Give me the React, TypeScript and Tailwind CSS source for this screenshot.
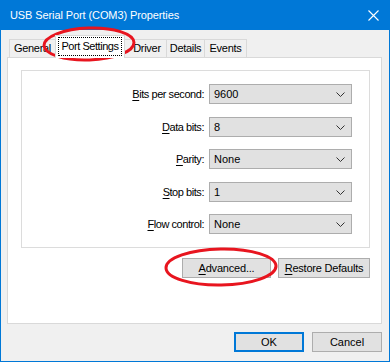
import React from "react";

const font = { fontFamily: '"Liberation Sans", Arial, sans-serif' };

function Chevron() {
  return (
    <svg width="9" height="5" viewBox="0 0 9 5" className="shrink-0">
      <polyline points="0.5,0.5 4.5,4.5 8.5,0.5" fill="none" stroke="#333" strokeWidth="1" />
    </svg>
  );
}

function Row({ label, u, value, mt }: { label: string; u: string; value: string; mt: string }) {
  return (
    <div className={`flex items-center h-[20px] ${mt}`}>
      <div className="w-[187px] text-right pr-[5px] text-[11px] tracking-[-0.45px] text-black leading-none whitespace-nowrap">
        <span className="underline underline-offset-2">{u}</span>
        {label}
      </div>
      <div className="w-[143px] h-[20px] border border-[#adadad] bg-[#e1e1e1] flex items-center pl-[4px] pr-[6px] justify-between">
        <span className="text-[11px] text-black leading-none">{value}</span>
        <Chevron />
      </div>
    </div>
  );
}

export default function App() {
  return (
    <div style={font} className="relative w-[390px] h-[362px] border-x border-b border-[#0078d7] bg-[#f0f0f0] flex flex-col overflow-hidden whitespace-nowrap">
      {/* Title bar */}
      <div className="h-[30px] bg-[#0078d7] flex items-center justify-between pl-[9px] pr-[10px] shrink-0">
        <span className="text-white text-[11px] tracking-[-0.1px]">USB Serial Port (COM3) Properties</span>
        <svg width="11" height="11" viewBox="0 0 11 11">
          <path d="M0.5 0.5 L10.5 10.5 M10.5 0.5 L0.5 10.5" stroke="white" strokeWidth="1.1" />
        </svg>
      </div>

      <div className="flex flex-col px-[6px] pt-[5px]">
        {/* Tabs */}
        <div className="flex items-end h-[22px] pl-[2px] text-[11px] tracking-[-0.3px] text-black">
          <div className="w-[46px] h-[18px] border-t border-l border-[#d9d9d9] flex items-center justify-center">General</div>
          <div className="relative z-10 w-[70px] h-[23px] -mb-px border-t border-x border-[#d9d9d9] bg-white flex items-start justify-center pt-[1px]">
            <div className="w-[64px] h-[19px] border border-dotted border-black flex items-center justify-center tracking-[-0.45px]">Port Settings</div>
          </div>
          <div className="w-[42px] h-[18px] border-t border-r border-[#d9d9d9] flex items-center justify-center pl-[3px]">Driver</div>
          <div className="w-[38px] h-[18px] border-t border-r border-[#d9d9d9] flex items-center justify-center">Details</div>
          <div className="w-[42px] h-[18px] border-t border-r border-[#d9d9d9] flex items-center justify-center">Events</div>
        </div>

        {/* Panel */}
        <div className="w-[375px] h-[267px] border border-[#d9d9d9] bg-white pl-[13px] pt-[12px]">
          <div className="w-[349px] h-[178px] border border-[#dcdcdc] pt-[13px]">
            <Row u="B" label="its per second:" value="9600" mt="mt-0" />
            <Row u="D" label="ata bits:" value="8" mt="mt-[13px]" />
            <Row u="P" label="arity:" value="None" mt="mt-[12px]" />
            <Row u="S" label="top bits:" value="1" mt="mt-[13px]" />
            <Row u="F" label="low control:" value="None" mt="mt-[12px]" />
          </div>
          <div className="w-[349px] flex justify-end gap-[7px] mt-[10px] text-[11px] tracking-[-0.2px] text-black">
            <div className="w-[89px] h-[20px] border border-[#adadad] bg-[#e1e1e1] flex items-center justify-center">
              <span><span className="underline underline-offset-2">A</span>dvanced...</span>
            </div>
            <div className="w-[92px] h-[20px] border border-[#adadad] bg-[#e1e1e1] flex items-center justify-center">
              <span><span className="underline underline-offset-2">R</span>estore Defaults</span>
            </div>
          </div>
        </div>

        {/* Bottom buttons */}
        <div className="w-[375px] flex justify-end gap-[8px] mt-[8px] text-[11px] text-black">
          <div className="w-[70px] h-[20px] border-2 border-[#0078d7] bg-[#e1e1e1] flex items-center justify-center">OK</div>
          <div className="w-[70px] h-[20px] border border-[#adadad] bg-[#e1e1e1] flex items-center justify-center">Cancel</div>
        </div>
      </div>

      {/* Red annotation ellipses */}
      <svg className="absolute left-0 top-0 pointer-events-none" width="390" height="362" viewBox="0 0 390 362">
        <ellipse cx="88" cy="44" rx="45" ry="16" fill="none" stroke="#e8151f" strokeWidth="3" transform="rotate(-2 88 44)" />
        <ellipse cx="220" cy="267" rx="55" ry="18" fill="none" stroke="#e8151f" strokeWidth="3" transform="rotate(-1 220 267)" />
      </svg>
    </div>
  );
}
